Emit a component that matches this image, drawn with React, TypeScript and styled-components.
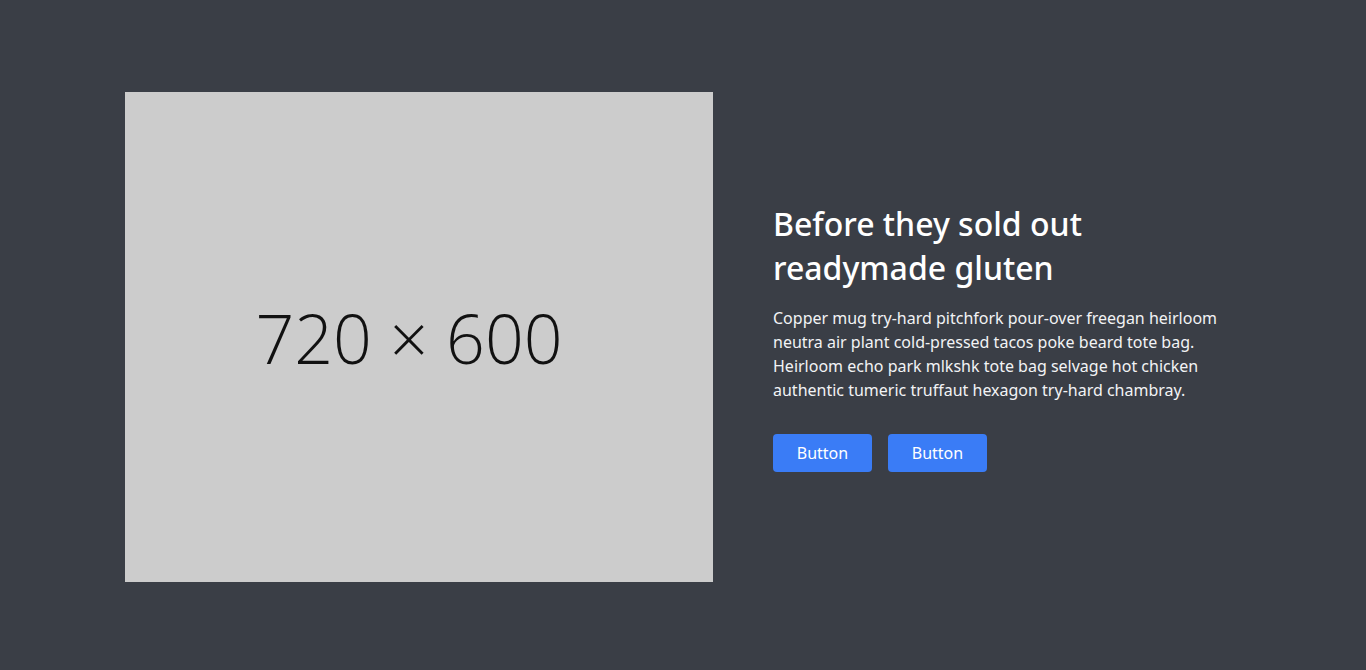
import styled, { createGlobalStyle } from "styled-components";

const GlobalStyle = createGlobalStyle`
  html, body {
    margin: 0;
    padding: 0;
    background-color: #3a3e46;
  }
  body {
    font-family: "Noto Sans", "Open Sans", sans-serif;
  }
  * {
    box-sizing: border-box;
  }
`;

function App() {
  return (
    <>
      <GlobalStyle />
      <Section>
        <Container>
          <Placeholder>
            <PlaceholderLabel>720 × 600</PlaceholderLabel>
          </Placeholder>
          <Content>
            <Title>
              Before they sold out
              <br />
              readymade gluten
            </Title>
            <Text>
              Copper mug try-hard pitchfork pour-over freegan heirloom neutra air plant cold-pressed tacos
              poke beard tote bag. Heirloom echo park mlkshk tote bag selvage hot chicken authentic tumeric
              truffaut hexagon try-hard chambray.
            </Text>
            <Buttons>
              <Button>Button</Button>
              <Button>Button</Button>
            </Buttons>
          </Content>
        </Container>
      </Section>
    </>
  );
}

const Section = styled.section`
  width: 100%;
  min-height: 670px;
  background-color: #3a3e46;
`;

const Container = styled.div`
  display: flex;
  align-items: center;
  gap: 60px;
  padding: 92px 125px 88px;
`;

const Placeholder = styled.div`
  flex: none;
  width: 588px;
  height: 490px;
  background-color: #cccccc;
  display: flex;
  align-items: center;
  justify-content: center;
  padding-right: 20px;
`;

const PlaceholderLabel = styled.span`
  font-family: "Open Sans", "Noto Sans", sans-serif;
  font-weight: 300;
  font-size: 68px;
  color: #111111;
`;

const Content = styled.div`
  display: flex;
  flex-direction: column;
  width: 470px;
`;

const Title = styled.h1`
  margin: 0 0 16px;
  font-size: 32px;
  line-height: 44px;
  font-weight: 500;
  color: #ffffff;
`;

const Text = styled.p`
  margin: 0 0 32px;
  font-size: 16px;
  line-height: 24px;
  color: #f2f3f5;
`;

const Buttons = styled.div`
  display: flex;
  gap: 16px;
`;

const Button = styled.button`
  width: 99px;
  height: 38px;
  border: none;
  border-radius: 4px;
  background-color: #3a7cf6;
  color: #ffffff;
  font-family: "Noto Sans", "Open Sans", sans-serif;
  font-size: 16px;
  cursor: pointer;
`;

export default App;
